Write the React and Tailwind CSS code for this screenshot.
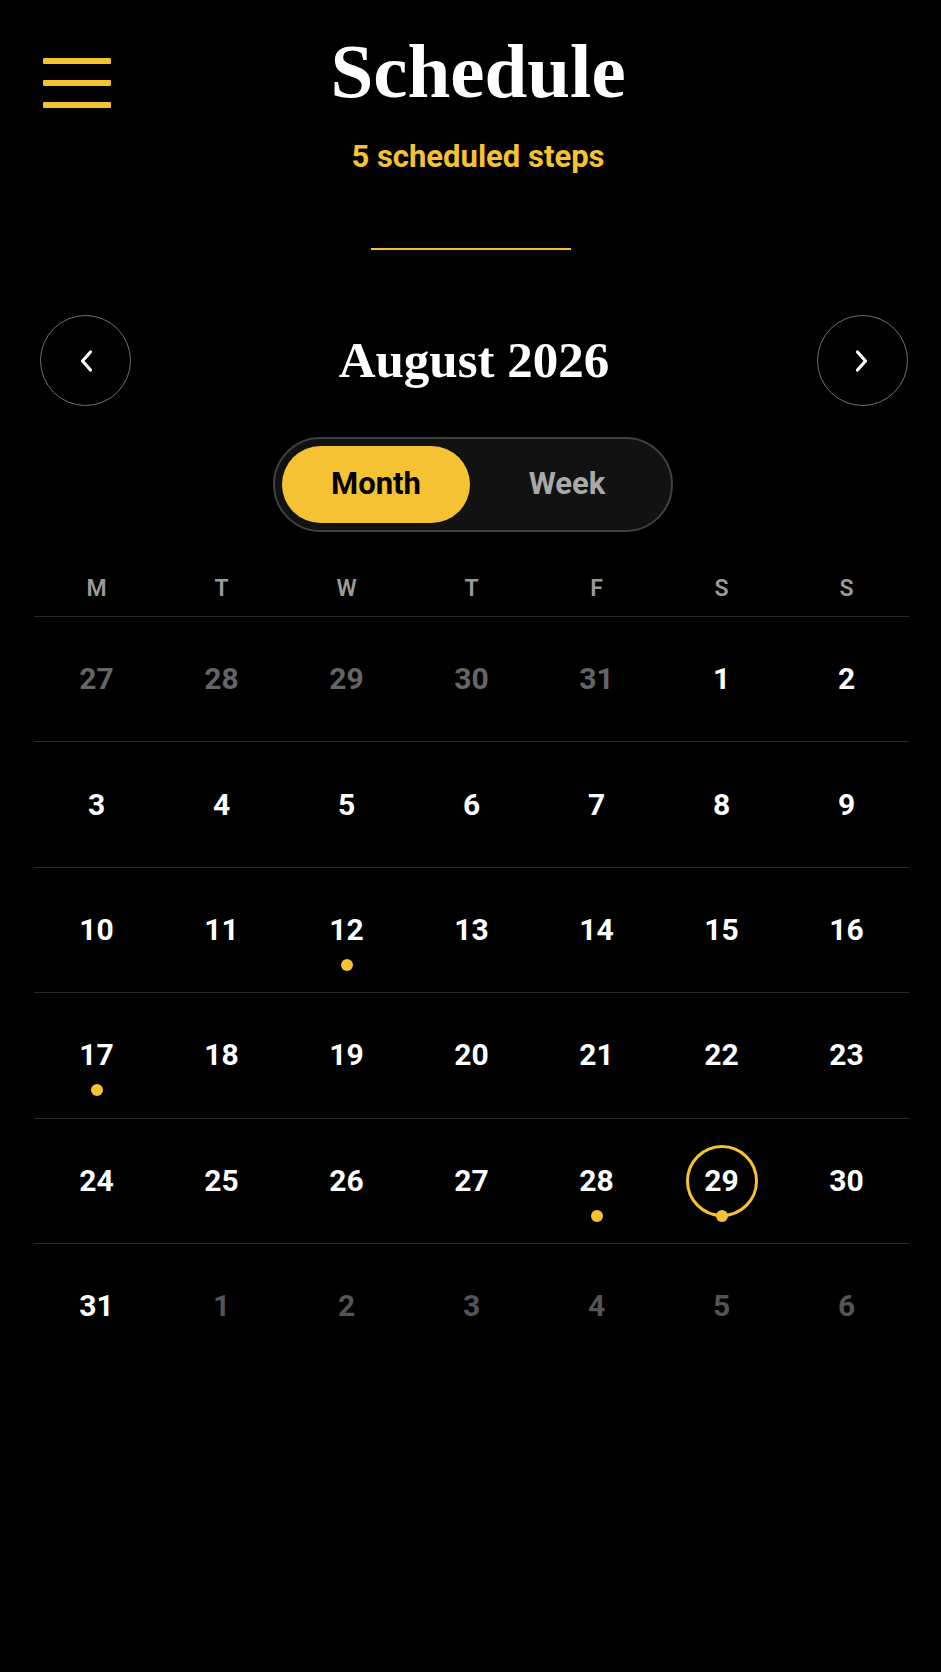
import React from "react";

const serif = { fontFamily: '"Liberation Serif", "DejaVu Serif", serif' };

const Chevron = ({ dir }) => (
  <svg width="16" height="24" viewBox="0 0 16 24" fill="none">
    <polyline
      points={dir === "left" ? "12.5,3 4.5,12 12.5,21" : "3.5,3 11.5,12 3.5,21"}
      stroke="#ffffff"
      strokeWidth="3.2"
      strokeLinecap="round"
      strokeLinejoin="round"
    />
  </svg>
);

// muted: "prev" | "next" | undefined
const weeks = [
  [
    { n: 27, muted: "prev" },
    { n: 28, muted: "prev" },
    { n: 29, muted: "prev" },
    { n: 30, muted: "prev" },
    { n: 31, muted: "prev" },
    { n: 1 },
    { n: 2 },
  ],
  [{ n: 3 }, { n: 4 }, { n: 5 }, { n: 6 }, { n: 7 }, { n: 8 }, { n: 9 }],
  [
    { n: 10 },
    { n: 11 },
    { n: 12, dot: true },
    { n: 13 },
    { n: 14 },
    { n: 15 },
    { n: 16 },
  ],
  [
    { n: 17, dot: true },
    { n: 18 },
    { n: 19 },
    { n: 20 },
    { n: 21 },
    { n: 22 },
    { n: 23 },
  ],
  [
    { n: 24 },
    { n: 25 },
    { n: 26 },
    { n: 27 },
    { n: 28, dot: true },
    { n: 29, dot: true, today: true },
    { n: 30 },
  ],
  [
    { n: 31 },
    { n: 1, muted: "next" },
    { n: 2, muted: "next" },
    { n: 3, muted: "next" },
    { n: 4, muted: "next" },
    { n: 5, muted: "next" },
    { n: 6, muted: "next" },
  ],
];

const DayCell = ({ day }) => {
  const color =
    day.muted === "prev"
      ? "text-[#656565]"
      : day.muted === "next"
      ? "text-[#545454]"
      : "text-white";
  return (
    <div className="relative flex h-[124.4px] items-center justify-center">
      {day.today && (
        <div className="absolute left-1/2 top-1/2 -ml-[36px] -mt-[36px] h-[72px] w-[72px] rounded-full border-[3px] border-[#f5c233]" />
      )}
      <span className={`relative text-[30px] font-bold leading-none ${color}`}>
        {day.n}
      </span>
      {day.dot && (
        <div className="absolute left-1/2 top-1/2 -ml-[6px] mt-[29px] h-[12px] w-[12px] rounded-full bg-[#f5c233]" />
      )}
    </div>
  );
};

export default function App() {
  return (
    <div
      className="min-h-screen bg-black pb-[100px] text-white"
      style={{ fontFamily: 'Roboto, "Liberation Sans", sans-serif' }}
    >
      {/* header */}
      <div className="flex items-start pl-[43px] pr-[43px] pt-[33px]">
        <button className="mt-[25px] flex w-[68px] flex-col gap-[16px]">
          <span className="h-[6px] w-full rounded-[1px] bg-[#f5c233]" />
          <span className="h-[6px] w-full rounded-[1px] bg-[#f5c233]" />
          <span className="h-[6px] w-full rounded-[1px] bg-[#f5c233]" />
        </button>
        <div className="flex flex-1 flex-col items-center">
          <h1 className="text-[77px] font-bold leading-none" style={serif}>
            Schedule
          </h1>
          <p className="mt-[31px] text-[31px] font-bold leading-none text-[#f5c233]">
            5 scheduled steps
          </p>
        </div>
        <div className="w-[53px]" />
      </div>

      <div className="mx-auto mt-[76px] h-[2px] w-[200px] bg-[#f5c233]" />

      {/* month nav */}
      <div className="mt-[65px] flex items-center justify-between pl-[40px] pr-[33px]">
        <button className="flex h-[91px] w-[91px] items-center justify-center rounded-full border-[1.5px] border-[#707070]">
          <Chevron dir="left" />
        </button>
        <h2 className="text-[51px] font-bold leading-none" style={serif}>
          August 2026
        </h2>
        <button className="flex h-[91px] w-[91px] items-center justify-center rounded-full border-[1.5px] border-[#707070]">
          <Chevron dir="right" />
        </button>
      </div>

      {/* view toggle */}
      <div className="mt-[31px] flex justify-center pl-[5px]">
        <div className="flex h-[95px] w-[400px] rounded-full border-2 border-[#404040] bg-[#121212] p-[7px]">
          <button className="flex w-[188px] items-center justify-center rounded-full bg-[#f5c233] text-[31px] font-bold text-black">
            Month
          </button>
          <button className="flex flex-1 items-center justify-center text-[31px] font-bold text-[#a9a9a9]">
            Week
          </button>
        </div>
      </div>

      {/* calendar */}
      <div className="ml-[34px] mr-[32px] mt-[30px]">
        <div className="grid h-[55px] grid-cols-7 items-center border-b border-[#2a2a2a]">
          {["M", "T", "W", "T", "F", "S", "S"].map((d, i) => (
            <div
              key={i}
              className="text-center text-[23px] font-semibold text-[#9a9a9a]"
            >
              {d}
            </div>
          ))}
        </div>
        {weeks.map((week, wi) => (
          <div
            key={wi}
            className={`grid grid-cols-7 ${
              wi < weeks.length - 1 ? "border-b border-[#2a2a2a]" : ""
            }`}
          >
            {week.map((day, di) => (
              <DayCell key={di} day={day} />
            ))}
          </div>
        ))}
      </div>
    </div>
  );
}
